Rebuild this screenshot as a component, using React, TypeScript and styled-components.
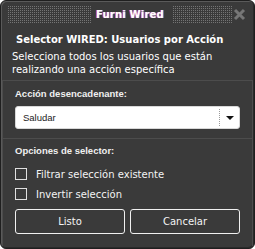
import React from "react";
import styled, { createGlobalStyle } from "styled-components";

const Global = createGlobalStyle`
  html, body { margin: 0; padding: 0; background: #ffffff; }
  body { font-family: "DejaVu Sans", "Liberation Sans", sans-serif; }
  * { box-sizing: border-box; }
`;

const Window = styled.div`
  width: 255px;
  height: 249px;
  background: #3a3a3a;
  border: 1px solid #1f1f1f;
  border-radius: 6px;
  box-shadow: inset 1px 1px 0 #5a5a5a, inset -1px -1px 0 #2a2a2a;
  display: flex;
  flex-direction: column;
  overflow: hidden;
  color: #ffffff;
`;

const Header = styled.div`
  height: 26px;
  display: flex;
  align-items: center;
  padding: 0 8px 0 7px;
`;

const Dots = styled.div<{ $width?: number }>`
  flex: ${(p) => (p.$width ? `0 0 ${p.$width}px` : "1")};
  height: 17px;
  background:
    linear-gradient(to bottom, transparent 1px, #3a3a3a 1px) 0 0 / 2px 2px,
    linear-gradient(to right, #747474 1px, #3a3a3a 1px) 0 0 / 2px 2px;
`;

const Title = styled.div`
  padding: 0 9px 0 4px;
  font-family: "DejaVu Sans", sans-serif;
  font-weight: bold;
  font-size: 10px;
  letter-spacing: 0.2px;
  color: #ffffff;
  text-shadow: -1px 0 rgba(255, 70, 120, 0.75), 1px 0 rgba(70, 140, 255, 0.75);
`;

const CloseWrap = styled.div`
  width: 14px;
  height: 17px;
  margin-left: -12px;
  display: flex;
  align-items: center;
  justify-content: center;
  background: #3a3a3a;
`;

const Intro = styled.div`
  padding: 7px 10px 4px 11px;
  display: flex;
  flex-direction: column;
  gap: 5px;
`;

const Heading = styled.div`
  font-family: "DejaVu Sans", sans-serif;
  font-weight: bold;
  font-size: 10px;
  padding-left: 4px;
  white-space: nowrap;
`;

const Desc = styled.div`
  font-family: "DejaVu Sans", sans-serif;
  font-size: 10px;
  line-height: 13px;
`;

const Panel = styled.div`
  flex: 1;
  margin: 0 1px 2px 1px;
  border: 1px solid #4c4c4c;
  border-bottom: none;
  display: flex;
  flex-direction: column;
`;

const Section = styled.div<{ $last?: boolean }>`
  padding: ${(p) => (p.$last ? "6px 12px 0 12px" : "7px 12px 9px 12px")};
  border-bottom: ${(p) => (p.$last ? "none" : "1px solid #4c4c4c")};
  display: flex;
  flex-direction: column;
`;

const Label = styled.div<{ $gap: number }>`
  font-family: "Liberation Sans", sans-serif;
  font-weight: bold;
  font-size: 9.5px;
  color: #f0f0f0;
  margin-bottom: ${(p) => p.$gap}px;
`;

const Select = styled.div`
  height: 23px;
  background: #ffffff;
  border: 1px solid #d8d8d8;
  border-radius: 3px;
  display: flex;
  align-items: center;
  color: #222222;
  font-family: "Liberation Sans", sans-serif;
  font-size: 9.5px;
`;

const SelectText = styled.div`
  flex: 1;
  padding-left: 7px;
`;

const SelectArrow = styled.div`
  width: 20px;
  height: 17px;
  border-left: 1px dotted #9a9a9a;
  display: flex;
  align-items: center;
  justify-content: center;
`;

const Arrow = styled.div`
  width: 0;
  height: 0;
  border-left: 4px solid transparent;
  border-right: 4px solid transparent;
  border-top: 4px solid #111111;
`;

const CheckRow = styled.label`
  display: flex;
  align-items: center;
  gap: 9px;
  height: 12px;
  margin-bottom: 8px;
  font-family: "DejaVu Sans", sans-serif;
  font-size: 10px;
  color: #f4f4f4;
`;

const Box = styled.span`
  width: 12px;
  height: 12px;
  border: 1px solid #e0e0e0;
  flex: none;
`;

const Buttons = styled.div`
  display: grid;
  grid-template-columns: 1fr 1fr;
  gap: 5px;
  margin-top: 1px;
`;

const Button = styled.button`
  height: 25px;
  background: transparent;
  border: 1px solid #f0f0f0;
  border-radius: 3px;
  color: #f4f4f4;
  font-family: "DejaVu Sans", sans-serif;
  font-size: 10px;
  padding: 0;
`;

export default function App() {
  return (
    <>
      <Global />
      <Window>
        <Header>
          <Dots $width={84} />
          <Title>Furni Wired</Title>
          <Dots />
          <CloseWrap>
            <svg width="13" height="13" viewBox="0 0 13 13">
              <path d="M2 2 L11 11 M11 2 L2 11" stroke="#767676" strokeWidth="3" />
            </svg>
          </CloseWrap>
        </Header>
        <Intro>
          <Heading>Selector WIRED: Usuarios por Acción</Heading>
          <Desc>
            Selecciona todos los usuarios que están
            <br />
            realizando una acción específica
          </Desc>
        </Intro>
        <Panel>
          <Section>
            <Label $gap={7}>Acción desencadenante:</Label>
            <Select>
              <SelectText>Saludar</SelectText>
              <SelectArrow>
                <Arrow />
              </SelectArrow>
            </Select>
          </Section>
          <Section $last>
            <Label $gap={12}>Opciones de selector:</Label>
            <CheckRow>
              <Box />
              Filtrar selección existente
            </CheckRow>
            <CheckRow>
              <Box />
              Invertir selección
            </CheckRow>
            <Buttons>
              <Button>Listo</Button>
              <Button>Cancelar</Button>
            </Buttons>
          </Section>
        </Panel>
      </Window>
    </>
  );
}
